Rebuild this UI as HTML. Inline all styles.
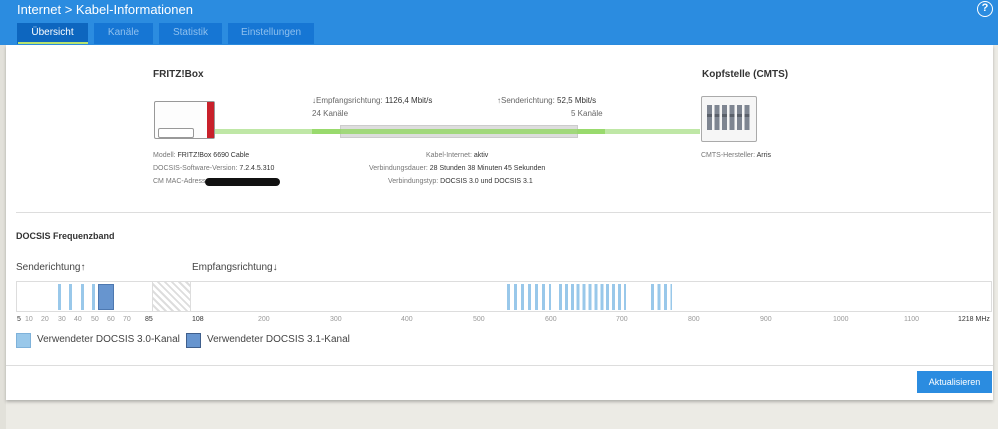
<!DOCTYPE html>
<html><head><meta charset="utf-8"><style>
*{margin:0;padding:0;box-sizing:border-box}
body{width:998px;height:429px;background:#ecebe5;font-family:"Liberation Sans",sans-serif;position:relative;overflow:hidden;color:#333}
.a{position:absolute;white-space:nowrap}
.s{font-size:7px;color:#777}
.s b{color:#333;font-weight:normal}
</style></head><body>
<div class="a" style="left:0;top:0;width:998px;height:45px;background:#2b8ce0"></div>
<div class="a" style="left:17px;top:2px;font-size:13px;color:#fff">Internet &gt; Kabel-Informationen</div>
<div class="a" style="left:977px;top:1px;width:16px;height:16px;border:1.5px solid #fff;border-radius:50%;color:#fff;font-size:11px;font-weight:bold;text-align:center;line-height:13px">?</div>
<div class="a" style="left:17px;top:23px;width:71px;height:21px;background:#0d66bf;color:#fff;font-size:10px;text-align:center;line-height:20px">Übersicht</div>
<div class="a" style="left:18px;top:42px;width:70px;height:2px;background:#b7e36f"></div>
<div class="a" style="left:94px;top:23px;width:59px;height:21px;background:#1676d4;color:#8fc0ee;font-size:10px;text-align:center;line-height:20px">Kanäle</div>
<div class="a" style="left:159px;top:23px;width:63px;height:21px;background:#1676d4;color:#8fc0ee;font-size:10px;text-align:center;line-height:20px">Statistik</div>
<div class="a" style="left:228px;top:23px;width:86px;height:21px;background:#1676d4;color:#8fc0ee;font-size:10px;text-align:center;line-height:20px">Einstellungen</div>
<div class="a" style="left:0;top:45px;width:6px;height:384px;background:#e2e1da"></div>
<div class="a" style="left:6px;top:45px;width:987px;height:355px;background:#fff;box-shadow:0 2px 3px rgba(0,0,0,.25)"></div>

<div class="a" style="left:153px;top:69px;font-size:10px;font-weight:bold">FRITZ!Box</div>
<div class="a" style="left:702px;top:69px;font-size:10px;font-weight:bold">Kopfstelle (CMTS)</div>
<!-- box icon -->
<div class="a" style="left:154px;top:101px;width:61px;height:38px;border:1px solid #999;border-radius:2px;background:#fdfdfd"></div>
<div class="a" style="left:207px;top:102px;width:7px;height:36px;background:#c8202a"></div>
<div class="a" style="left:158px;top:128px;width:36px;height:10px;border:1px solid #999;border-radius:2px;background:#fff"></div>
<!-- cable -->
<div class="a" style="left:215px;top:129px;width:485px;height:5px;background:#bfe7a6"></div>
<div class="a" style="left:340px;top:125px;width:238px;height:13px;background:#ddd;border:1px solid #ccc"></div>
<div class="a" style="left:312px;top:129px;width:293px;height:5px;background:rgba(140,214,90,.75)"></div>
<!-- cmts icon -->
<div class="a" style="left:701px;top:96px;width:56px;height:46px;border:1px solid #aaa;border-radius:2px;background:#f6f6f6"></div>
<div class="a" style="left:707px;top:105px;width:44px;height:25px;background:repeating-linear-gradient(90deg,#7e8591 0 5px,#f6f6f6 5px 7.5px)"></div>
<div class="a" style="left:707px;top:114px;width:44px;height:3px;background:repeating-linear-gradient(90deg,#5a606a 0 5px,#f6f6f6 5px 7.5px)"></div>

<div class="a" style="left:312px;top:96px;font-size:8px;color:#666">↓Empfangsrichtung: <span style="color:#333">1126,4 Mbit/s</span></div>
<div class="a" style="left:312px;top:109px;font-size:8px;color:#666">24 Kanäle</div>
<div class="a" style="left:497px;top:96px;font-size:8px;color:#666">↑Senderichtung: <span style="color:#333">52,5 Mbit/s</span></div>
<div class="a" style="left:571px;top:109px;font-size:8px;color:#666">5 Kanäle</div>

<div class="a s" style="left:153px;top:152px">Modell: <b>FRITZ!Box 6690 Cable</b></div>
<div class="a s" style="left:153px;top:165px">DOCSIS-Software-Version: <b>7.2.4.5.310</b></div>
<div class="a s" style="left:153px;top:178px">CM MAC-Adresse</div>
<div class="a" style="left:205px;top:178px;width:75px;height:8px;background:#111;border-radius:4px"></div>
<div class="a s" style="left:426px;top:152px">Kabel-Internet: <b>aktiv</b></div>
<div class="a s" style="left:369px;top:165px">Verbindungsdauer: <b>28 Stunden 38 Minuten 45 Sekunden</b></div>
<div class="a s" style="left:388px;top:178px">Verbindungstyp: <b>DOCSIS 3.0 und DOCSIS 3.1</b></div>
<div class="a s" style="left:701px;top:152px">CMTS-Hersteller: <b>Arris</b></div>

<div class="a" style="left:16px;top:212px;width:975px;height:1px;background:#ddd"></div>
<div class="a" style="left:16px;top:231px;font-size:9px;font-weight:bold">DOCSIS Frequenzband</div>
<div class="a" style="left:16px;top:262px;font-size:10px;color:#444">Senderichtung↑</div>
<div class="a" style="left:192px;top:262px;font-size:10px;color:#444">Empfangsrichtung↓</div>

<div class="a" style="left:16px;top:281px;width:976px;height:31px;border:1px solid #ddd;background:#fff"></div>
<div class="a" style="left:152px;top:282px;width:39px;height:29px;background:repeating-linear-gradient(45deg,#fff 0 3px,#ddd 3px 5px);border-left:1px solid #ddd;border-right:1px solid #ddd"></div>
<div class="a" style="left:58px;top:284px;width:3px;height:26px;background:#99c8ea"></div>
<div class="a" style="left:69px;top:284px;width:3px;height:26px;background:#99c8ea"></div>
<div class="a" style="left:81px;top:284px;width:3px;height:26px;background:#99c8ea"></div>
<div class="a" style="left:92px;top:284px;width:3px;height:26px;background:#99c8ea"></div>
<div class="a" style="left:98px;top:284px;width:16px;height:26px;background:#6795cf;border:1px solid #4d78b0"></div>
<div class="a" style="left:507px;top:284px;width:44px;height:26px;background:repeating-linear-gradient(90deg,#99c8ea 0 3px,#fff 3px 7px)"></div>
<div class="a" style="left:559px;top:284px;width:67px;height:26px;background:repeating-linear-gradient(90deg,#99c8ea 0 3px,#fff 3px 5.9px)"></div>
<div class="a" style="left:651px;top:284px;width:21px;height:26px;background:repeating-linear-gradient(90deg,#99c8ea 0 3px,#fff 3px 6.5px)"></div>

<div class="a" style="top:316px;left:0;width:998px;font-size:7px;color:#999">
<span class="a" style="left:17px;color:#333">5</span><span class="a" style="left:25px">10</span><span class="a" style="left:41px">20</span><span class="a" style="left:58px">30</span><span class="a" style="left:74px">40</span><span class="a" style="left:91px">50</span><span class="a" style="left:107px">60</span><span class="a" style="left:123px">70</span><span class="a" style="left:145px;color:#333">85</span>
<span class="a" style="left:192px;color:#333">108</span><span class="a" style="left:258px">200</span><span class="a" style="left:330px">300</span><span class="a" style="left:401px">400</span><span class="a" style="left:473px">500</span><span class="a" style="left:545px">600</span><span class="a" style="left:616px">700</span><span class="a" style="left:688px">800</span><span class="a" style="left:760px">900</span><span class="a" style="left:833px">1000</span><span class="a" style="left:904px">1100</span><span class="a" style="left:958px;color:#333">1218 MHz</span></div>

<div class="a" style="left:16px;top:333px;width:15px;height:15px;background:#99c8ea;border:1px solid #7fb2da"></div>
<div class="a" style="left:37px;top:334px;font-size:10px;color:#444">Verwendeter DOCSIS 3.0-Kanal</div>
<div class="a" style="left:186px;top:333px;width:15px;height:15px;background:#6795cf;border:1px solid #3f5f8c"></div>
<div class="a" style="left:207px;top:334px;font-size:10px;color:#444">Verwendeter DOCSIS 3.1-Kanal</div>

<div class="a" style="left:6px;top:365px;width:987px;height:1px;background:#ddd"></div>
<div class="a" style="left:917px;top:371px;width:75px;height:22px;background:#2b8ce0;color:#fff;font-size:9px;text-align:center;line-height:22px">Aktualisieren</div>
</body></html>
